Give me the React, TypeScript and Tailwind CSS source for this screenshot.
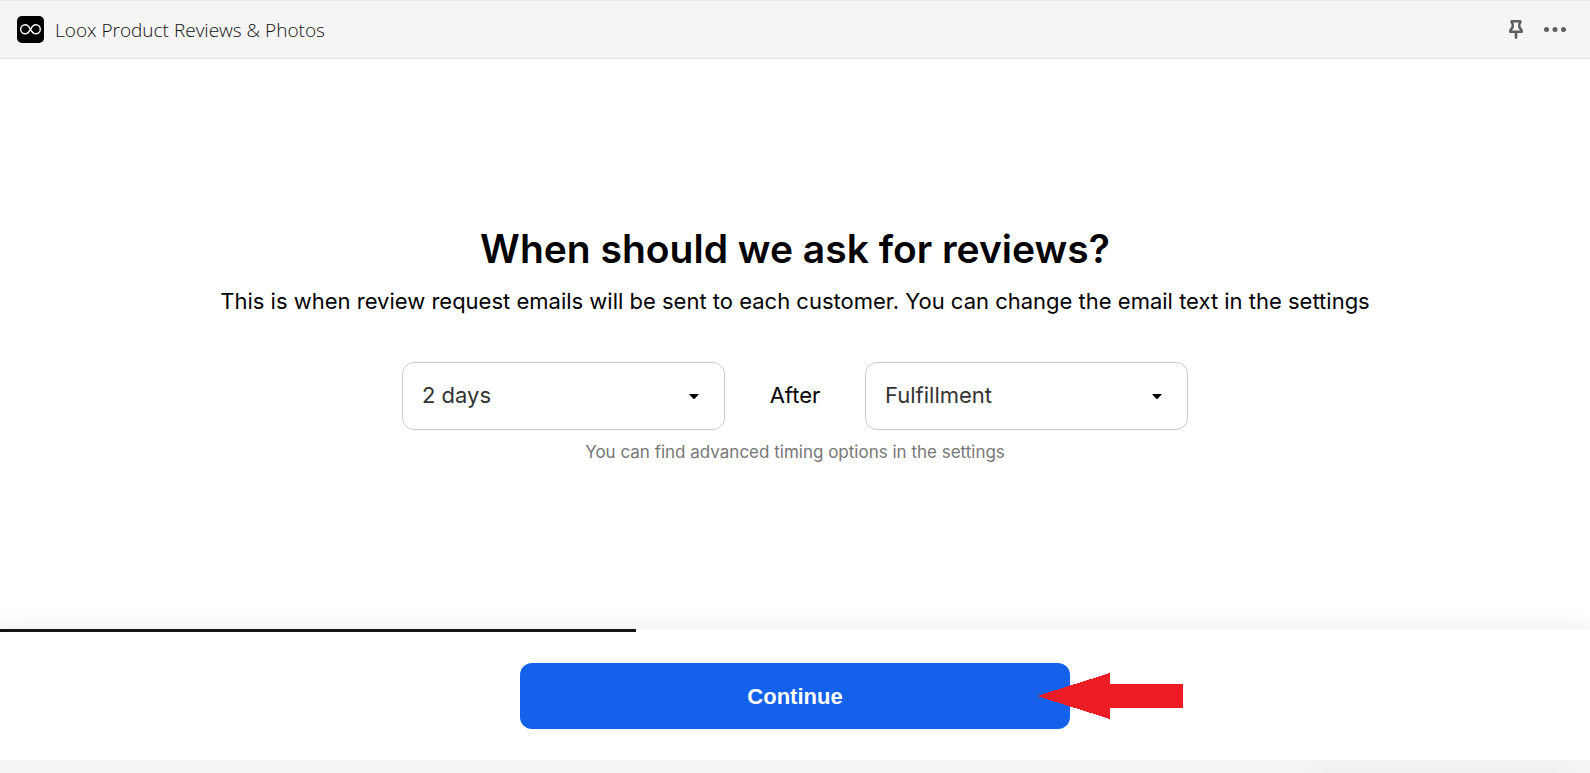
type Option = {
    value: string;
    label: string;
};

type TimingSelectProps = {
    label: string;
    options: Option[];
};

const DELAYS: Option[] = [
    { value: "2", label: "2 days" },
    { value: "7", label: "7 days" },
    { value: "14", label: "14 days" },
];

const EVENTS: Option[] = [
    { value: "fulfillment", label: "Fulfillment" },
    { value: "purchase", label: "Purchase" },
];

const PROGRESS = 40;

function TimingSelect({ label, options }: TimingSelectProps) {
    return (
        <div className="relative w-full max-w-[323px]">
            <select
                aria-label={label}
                className="h-[68px] w-full appearance-none rounded-xl border border-[#c9c9d1] bg-white pr-12 pl-[19px] text-[22px] text-[#333333]"
            >
                {options.map((option) => (
                    <option key={option.value} value={option.value}>
                        {option.label}
                    </option>
                ))}
            </select>
            <svg
                viewBox="0 0 10 5"
                className="pointer-events-none absolute top-8 right-[26px] h-[5px] w-[10px]"
                aria-hidden="true"
            >
                <path d="M0 0h10L6 4.5Q5 5.3 4 4.5Z" fill="#000" />
            </svg>
        </div>
    );
}

function TopBar() {
    return (
        <header className="flex h-[59px] items-center justify-between border-t border-b border-t-[#ebebeb] border-b-[#e1e1e1] bg-[#f5f5f5] pr-6 pl-[17px]">
            <div className="flex items-center gap-[11px]">
                <svg viewBox="0 0 27 27" className="h-[27px] w-[27px]" aria-hidden="true">
                    <rect width="27" height="27" rx="5" fill="#000" />
                    <path
                        d="M13.5 13.3C12 10.6 10.4 8.8 8.2 8.8a4.5 4.5 0 0 0 0 9c2.2 0 3.8-1.8 5.3-4.5s3.1-4.5 5.3-4.5a4.5 4.5 0 0 1 0 9c-2.2 0-3.8-1.8-5.3-4.5Z"
                        fill="none"
                        stroke="#fff"
                        strokeWidth="1.4"
                    />
                </svg>
                <span className="font-['Open_Sans',sans-serif] text-[19px] leading-7 font-light text-[#111213]">
                    Loox Product Reviews &amp; Photos
                </span>
            </div>

            <div className="flex items-center gap-[21px]">
                <button type="button" aria-label="Pin app">
                    <svg viewBox="0 0 14 19" className="block h-[19px] w-[14px]" aria-hidden="true">
                        <path
                            d="M3 1.3H11Q11.7 1.3 11.3 2Q9.6 4.5 10.4 7.2Q10.8 8.2 11.8 9.2Q12.7 10.2 12.7 11.8H1.3Q1.3 10.2 2.2 9.2Q3.2 8.2 3.6 7.2Q4.4 4.5 2.7 2Q2.3 1.3 3 1.3ZM7 12V17.6"
                            fill="none"
                            stroke="#5c5f62"
                            strokeWidth="2.6"
                            strokeLinecap="round"
                            strokeLinejoin="round"
                        />
                    </svg>
                </button>
                <button type="button" aria-label="More actions">
                    <svg viewBox="0 0 22 5" className="block h-[5px] w-[22px]" fill="#5c5f62" aria-hidden="true">
                        <circle cx="2.5" cy="2.5" r="2.5" />
                        <circle cx="11" cy="2.5" r="2.5" />
                        <circle cx="19.5" cy="2.5" r="2.5" />
                    </svg>
                </button>
            </div>
        </header>
    );
}

export default function App() {
    return (
        <div className="flex min-h-screen flex-col overflow-hidden bg-white font-['Inter',sans-serif] text-black">
            <TopBar />

            <main className="flex flex-1 flex-col items-center justify-center px-6">
                <h1 className="text-center text-[39px] leading-[48px] font-semibold">
                    When should we ask for reviews?
                </h1>
                <p className="mt-3 text-center text-[22px] leading-8">
                    This is when review request emails will be sent to each customer. You can change the email text in
                    the settings
                </p>

                <div className="mt-[45px] flex w-full items-center justify-center">
                    <TimingSelect label="Delay" options={DELAYS} />
                    <span className="w-[140px] shrink-0 text-center text-[22px]">After</span>
                    <TimingSelect label="Event" options={EVENTS} />
                </div>

                <p className="mt-[10px] text-center text-[17px] leading-6 text-[#777777]">
                    You can find advanced timing options in the settings
                </p>
            </main>

            <footer className="relative bg-white shadow-[0_0_20px_rgba(0,0,0,0.1)]">
                <div
                    role="progressbar"
                    aria-label="Setup progress"
                    aria-valuenow={PROGRESS}
                    className="h-[3px] bg-[#151515]"
                    style={{ width: `${PROGRESS}%` }}
                />
                <div className="flex justify-center px-6 py-[31px]">
                    <div className="relative w-full max-w-[550px]">
                        <button
                            type="button"
                            className="block h-[66px] w-full rounded-xl bg-[#1461eb] font-['Liberation_Sans',Arial,sans-serif] text-[22px] font-bold text-white"
                        >
                            Continue
                        </button>
                        <svg
                            viewBox="0 0 146 46"
                            className="pointer-events-none absolute top-[10px] left-full -ml-[33px] h-[46px] w-[146px]"
                            shapeRendering="crispEdges"
                            aria-hidden="true"
                        >
                            <path d="M0 23 73 0V11H146V35H73V46Z" fill="#ed1c24" />
                        </svg>
                    </div>
                </div>
            </footer>

            <div className="relative flex h-[13px] justify-end overflow-hidden bg-[#f5f5f5]">
                <div className="mt-5 mr-5 h-10 w-[260px] shadow-[0_0_30px_rgba(0,0,0,0.08)]" />
            </div>
        </div>
    );
}
